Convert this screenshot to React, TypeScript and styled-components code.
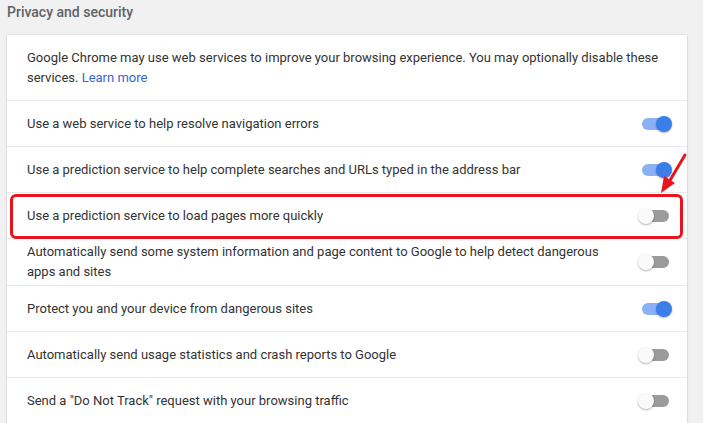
import React from "react";
import styled, { createGlobalStyle } from "styled-components";

const Global = createGlobalStyle`
  html, body { margin: 0; padding: 0; background: #f1f1f1; }
  body { font-family: Roboto, "Noto Sans", sans-serif; overflow: hidden; }
`;

const Page = styled.div`
  width: 703px;
  height: 423px;
  padding: 0 16px 0 7px;
  box-sizing: border-box;
  position: relative;
`;

const Title = styled.div`
  height: 35px;
  padding-top: 3px;
  box-sizing: border-box;
  font-size: 14px;
  line-height: 18px;
  color: #5f6368;
  font-weight: 500;
`;

const Card = styled.div`
  background: #fff;
  box-shadow: 0 0 1px rgba(0,0,0,0.25), 0 1px 2px rgba(0,0,0,0.12);
  width: 680px;
`;

const Intro = styled.div`
  padding: 13px 20px 12px 20px;
  font-size: 13px;
  line-height: 20px;
  color: #333;
`;

const Link = styled.a`
  color: #3367d6;
  text-decoration: none;
`;

const Row = styled.div<{ $highlight?: boolean }>`
  position: relative;
  display: flex;
  align-items: center;
  justify-content: space-between;
  min-height: 46px;
  box-sizing: border-box;
  padding: 3px 16px 3px 20px;
  border-top: 1px solid #e9e9e9;
  font-size: 13px;
  line-height: 20px;
  color: #333;
  ${(p) =>
    p.$highlight &&
    `
    &::after {
      content: "";
      position: absolute;
      left: 3px;
      right: 4px;
      top: 1px;
      bottom: -1px;
      border: 3px solid #e8131b;
      border-radius: 6px;
      pointer-events: none;
      z-index: 2;
    }
  `}
`;

const Label = styled.div`
  max-width: 590px;
`;

const Track = styled.div<{ $on: boolean }>`
  position: relative;
  width: 27px;
  height: 12px;
  border-radius: 6px;
  margin-right: 2px;
  background: ${(p) => (p.$on ? "#8ab0f5" : "#9b9b9b")};
  flex: none;
`;

const Knob = styled.div<{ $on: boolean }>`
  position: absolute;
  top: -2px;
  left: ${(p) => (p.$on ? "14px" : "-4px")};
  width: 16px;
  height: 16px;
  border-radius: 50%;
  background: ${(p) => (p.$on ? "#3b7de9" : "#fafafa")};
  box-shadow: 0 1px 2px rgba(0,0,0,0.3);
`;

const Arrow = styled.svg`
  position: absolute;
  left: 655px;
  top: 150px;
  z-index: 3;
`;

const Toggle = ({ on }: { on: boolean }) => (
  <Track $on={on}>
    <Knob $on={on} />
  </Track>
);

const rows: { text: string; on: boolean; highlight?: boolean }[] = [
  { text: "Use a web service to help resolve navigation errors", on: true },
  { text: "Use a prediction service to help complete searches and URLs typed in the address bar", on: true },
  { text: "Use a prediction service to load pages more quickly", on: false, highlight: true },
  { text: "Automatically send some system information and page content to Google to help detect dangerous apps and sites", on: false },
  { text: "Protect you and your device from dangerous sites", on: true },
  { text: "Automatically send usage statistics and crash reports to Google", on: false },
  { text: "Send a \"Do Not Track\" request with your browsing traffic", on: false },
];

export default function App() {
  return (
    <Page>
      <Global />
      <Title>Privacy and security</Title>
      <Card>
        <Intro>
          Google Chrome may use web services to improve your browsing experience. You may optionally disable these
          <br />
          services. <Link href="#">Learn more</Link>
        </Intro>
        {rows.map((r) => (
          <Row key={r.text} $highlight={r.highlight}>
            <Label>{r.text}</Label>
            <Toggle on={r.on} />
          </Row>
        ))}
      </Card>
      <Arrow width="40" height="50" viewBox="0 0 40 50">
        <line x1="30" y1="5" x2="14" y2="32" stroke="#e8131b" strokeWidth="3" strokeLinecap="round" />
        <polygon points="6,43 9,26 20,33" fill="#e8131b" />
      </Arrow>
    </Page>
  );
}
